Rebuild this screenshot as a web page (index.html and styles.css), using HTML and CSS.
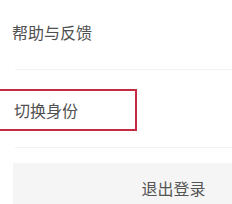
FILE: index.html
```html
<!DOCTYPE html>
<html lang="zh">
<head>
<meta charset="utf-8">
<link rel="stylesheet" href="styles.css">
</head>
<body>
<div class="page">
  <div class="item item-help">帮助与反馈</div>
  <div class="divider"></div>
  <div class="item item-switch"><span>切换身份</span></div>
  <div class="divider divider-2"></div>
  <div class="logout">退出登录</div>
</div>
</body>
</html>
```
FILE: styles.css
```css
html, body {
  margin: 0;
  padding: 0;
  background: #ffffff;
  overflow: hidden;
}
.page {
  width: 232px;
  height: 204px;
  overflow: hidden;
  font-family: "Noto Sans CJK SC", "Noto Sans", sans-serif;
  font-size: 16px;
  color: #505050;
}
.item {
  line-height: 22px;
  padding-left: 12px;
}
.item-help {
  padding-top: 21px;
  height: 48px;
}
.divider {
  height: 1px;
  margin-left: 15px;
  background: #f2f2f2;
}
.item-switch {
  margin-top: 19px;
  margin-left: -2px;
  width: 121px;
  height: 38px;
  padding-left: 14px;
  border: 2px solid #c42a42;
  display: flex;
  align-items: center;
}
.divider-2 {
  margin-top: 16px;
}
.logout {
  margin-top: 15px;
  margin-left: 13px;
  width: 321px;
  height: 50px;
  background: #f5f5f5;
  color: #555555;
  display: flex;
  justify-content: center;
  align-items: center;
}
```
